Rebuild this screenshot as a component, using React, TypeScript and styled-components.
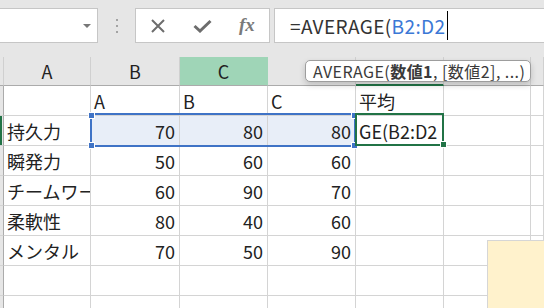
import React from "react";
import styled, { createGlobalStyle } from "styled-components";

const GlobalStyle = createGlobalStyle`
  html, body {
    margin: 0;
    padding: 0;
    background: #fff;
  }
  body {
    font-family: "Noto Sans CJK JP", "Noto Sans", sans-serif;
    overflow: hidden;
  }
`;

const COLS = [4, 87, 89, 88, 88, 88, 87];
const HEADER_H = 29;
const ROW_H = 30;

const Frame = styled.div`
  position: relative;
  width: 544px;
  height: 308px;
  overflow: hidden;
  background: #fff;
`;

const Toolbar = styled.div`
  height: 57px;
  box-sizing: border-box;
  padding-top: 8px;
  background: #e6e6e6;
  display: flex;
  align-items: flex-start;
`;

const NameBox = styled.div`
  width: 98px;
  height: 35px;
  box-sizing: border-box;
  background: #fff;
  border: 1px solid #c6c6c6;
  border-left: none;
  display: flex;
  align-items: center;
  justify-content: flex-end;
  padding-right: 6px;
`;

const Caret = styled.span`
  width: 0;
  height: 0;
  border-left: 4px solid transparent;
  border-right: 4px solid transparent;
  border-top: 4px solid #777;
`;

const Grip = styled.div`
  margin-left: 18px;
  margin-top: 11px;
  display: flex;
  flex-direction: column;
  gap: 4px;
`;

const GripDot = styled.span`
  width: 2px;
  height: 2px;
  background: #a3a3a3;
`;

const FxButtons = styled.div`
  margin-left: 17px;
  width: 135px;
  height: 35px;
  box-sizing: border-box;
  background: #fff;
  border: 1px solid #c6c6c6;
  display: grid;
  grid-template-columns: repeat(3, 1fr);
  align-items: center;
  justify-items: center;
`;

const FxLabel = styled.span`
  font-family: "Liberation Serif", serif;
  font-style: italic;
  font-weight: 700;
  font-size: 19px;
  color: #7a7a7a;
  line-height: 1;
  margin-top: -2px;
`;

const FormulaInput = styled.div`
  flex: 1;
  margin-left: 4px;
  height: 35px;
  box-sizing: border-box;
  background: #fff;
  border: 1px solid #c6c6c6;
  border-right: none;
  padding-left: 15px;
  display: flex;
  align-items: center;
  font-size: 19px;
  letter-spacing: 0.4px;
  color: #333;
  white-space: nowrap;
`;

const Ref = styled.span`
  color: #3b78d6;
`;

const Cursor = styled.span`
  display: inline-block;
  width: 1px;
  height: 29px;
  background: #000;
  margin-left: 1px;
`;

const SheetArea = styled.div`
  position: relative;
`;

const Sheet = styled.div`
  display: grid;
  grid-template-columns: ${COLS.map((c) => c + "px").join(" ")} 1fr;
  grid-template-rows: ${HEADER_H}px;
  grid-auto-rows: ${ROW_H}px;
`;

const ColHead = styled.div<{ $hl?: boolean; $active?: boolean }>`
  box-sizing: border-box;
  background: ${(p) => (p.$hl ? "#9fd5b7" : "#e6e6e6")};
  border-right: 1px solid ${(p) => (p.$hl ? "#9fd5b7" : "#d0d0d0")};
  border-bottom: ${(p) => (p.$active ? "2px solid #217346" : "1px solid #ababab")};
  display: flex;
  align-items: center;
  justify-content: center;
  font-size: 18px;
  color: #222;
`;

const RowHead = styled.div<{ $active?: boolean }>`
  box-sizing: border-box;
  background: #e6e6e6;
  border-right: 1px solid #ababab;
  border-bottom: 1px solid #d4d4d4;
  box-shadow: ${(p) => (p.$active ? "inset 2px 0 0 #217346" : "none")};
`;

const Cell = styled.div<{ $num?: boolean; $sel?: boolean }>`
  box-sizing: border-box;
  background: ${(p) => (p.$sel ? "#e8eef8" : "#fff")};
  border-right: 1px solid #d4d4d4;
  border-bottom: 1px solid #d4d4d4;
  display: flex;
  align-items: center;
  justify-content: ${(p) => (p.$num ? "flex-end" : "flex-start")};
  padding: 0 4px 0 3px;
  font-size: 18px;
  color: #222;
  white-space: nowrap;
  overflow: hidden;
`;

const SelectionBox = styled.div`
  position: absolute;
  box-sizing: border-box;
  border: 2px solid #3f73c6;
`;

const Handle = styled.span<{ $green?: boolean }>`
  position: absolute;
  width: 5px;
  height: 5px;
  background: ${(p) => (p.$green ? "#217346" : "#3f73c6")};
  border: 1px solid #fff;
`;

const ActiveBox = styled.div`
  position: absolute;
  box-sizing: border-box;
  border: 2px solid #217346;
`;

const Tooltip = styled.div`
  position: absolute;
  left: 305px;
  top: 60px;
  width: 226px;
  height: 22px;
  box-sizing: border-box;
  background: #fff;
  border: 1px solid #9d9d9d;
  border-radius: 5px;
  box-shadow: 0 3px 6px rgba(0, 0, 0, 0.18);
  padding-left: 7px;
  display: flex;
  align-items: center;
  font-size: 16px;
  letter-spacing: 0.45px;
  color: #3a3a3a;
  white-space: nowrap;
`;

const Bold = styled.b`
  font-weight: 700;
`;

const Note = styled.div`
  position: absolute;
  left: 487px;
  top: 240px;
  right: 0;
  bottom: 0;
  background: #fff2cc;
  border-left: 1px solid #d6d6d6;
  border-top: 1px solid #d6d6d6;
`;

type Value = string | number;

const rows: Value[][] = [
  ["", "A", "B", "C", "平均", "", ""],
  ["持久力", 70, 80, 80, "GE(B2:D2", "", ""],
  ["瞬発力", 50, 60, 60, "", "", ""],
  ["チームワーク", 60, 90, 70, "", "", ""],
  ["柔軟性", 80, 40, 60, "", "", ""],
  ["メンタル", 70, 50, 90, "", "", ""],
  ["", "", "", "", "", "", ""],
  ["", "", "", "", "", "", ""],
];

// D, E and F headers sit under the tooltip in the screenshot
const letters = ["A", "B", "C", "", "", "", ""];

function CrossIcon() {
  return (
    <svg width="14" height="14" viewBox="0 0 14 14">
      <path d="M1 1 L13 13 M13 1 L1 13" stroke="#6d6d6d" strokeWidth="2" />
    </svg>
  );
}

function CheckIcon() {
  return (
    <svg width="19" height="14" viewBox="0 0 19 14">
      <path d="M1.5 7 L7 12 L17.5 2" stroke="#6d6d6d" strokeWidth="3" fill="none" />
    </svg>
  );
}

function Selection() {
  const left = COLS[0] + COLS[1] - 1;
  const top = HEADER_H + ROW_H - 3;
  const width = COLS[2] + COLS[3] + COLS[4] + 1;
  const height = ROW_H + 4;
  const aLeft = left + width - 1;
  return (
    <>
      <SelectionBox style={{ left, top, width, height }} />
      <Handle style={{ left: left - 2, top: top - 1 }} />
      <Handle style={{ left: left - 2, top: top + height - 5 }} />
      <Handle style={{ left: aLeft - 4, top: top - 1 }} />
      <Handle style={{ left: aLeft - 4, top: top + height - 5 }} />
      <ActiveBox style={{ left: aLeft, top, width: COLS[5] + 1, height: height - 1 }} />
      <Handle $green style={{ left: aLeft + COLS[5] - 3, top: top + height - 6 }} />
    </>
  );
}

export default function App() {
  return (
    <Frame>
      <GlobalStyle />
      <Toolbar>
        <NameBox>
          <Caret />
        </NameBox>
        <Grip>
          <GripDot />
          <GripDot />
          <GripDot />
        </Grip>
        <FxButtons>
          <CrossIcon />
          <CheckIcon />
          <FxLabel>fx</FxLabel>
        </FxButtons>
        <FormulaInput>
          =AVERAGE(<Ref>B2:D2</Ref>
          <Cursor />
        </FormulaInput>
      </Toolbar>
      <SheetArea>
        <Sheet>
          <ColHead />
          {letters.map((l, i) => (
            <ColHead key={i} $hl={i === 2} $active={i === 4}>
              {l}
            </ColHead>
          ))}
          {rows.map((row, r) => (
            <React.Fragment key={r}>
              <RowHead $active={r === 1} />
              {row.map((v, c) => (
                <Cell key={c} $num={typeof v === "number"} $sel={r === 1 && c >= 1 && c <= 3}>
                  {v}
                </Cell>
              ))}
            </React.Fragment>
          ))}
        </Sheet>
        <Selection />
      </SheetArea>
      <Tooltip>
        AVERAGE(<Bold>数値1</Bold>, [数値2], ...)
      </Tooltip>
      <Note />
    </Frame>
  );
}
